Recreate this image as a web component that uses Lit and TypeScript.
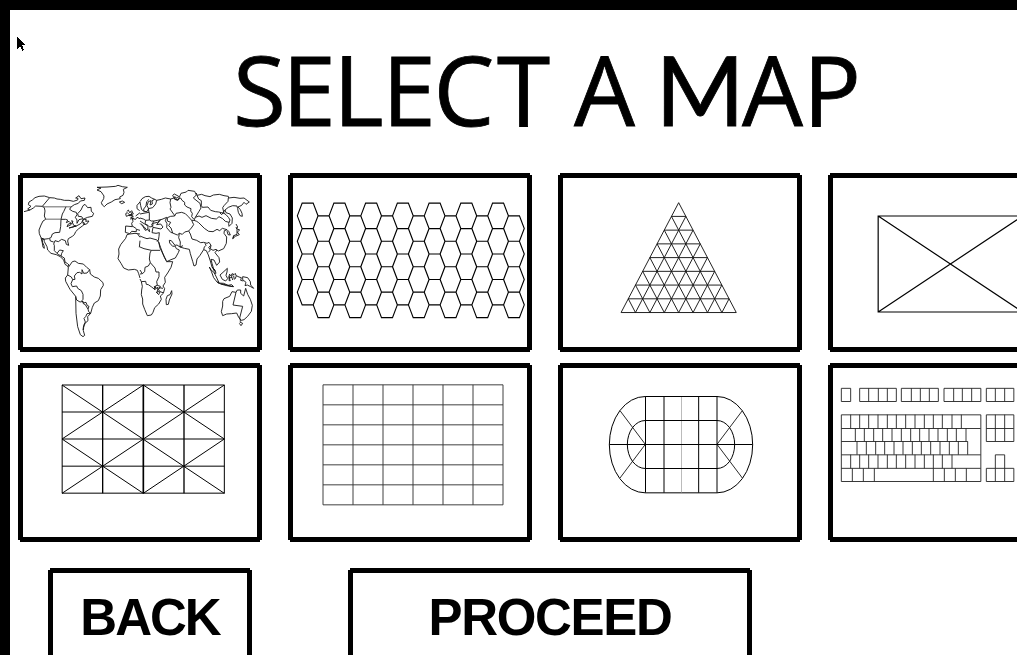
import { LitElement, html, svg, css } from "lit";
import { customElement, property } from "lit/decorators.js";

const v = (xs: number[], y1: number, y2: number) => xs.map((x) => `M${x} ${y1}V${y2}`).join("");
const h = (ys: number[], x1: number, x2: number) => ys.map((y) => `M${x1} ${y}H${x2}`).join("");
const box = (x1: number, y1: number, x2: number, y2: number) => `M${x1} ${y1}H${x2}V${y2}H${x1}Z`;

// Every drawing uses three units per pixel inside its card.
const americas = [
  "M27 125L45 120 38 117 48 109 40 104 42 96 52 90 60 83 72 79 88 78 104 83 82 109 62 108 55 114 45 120",
  "M104 83L118 84 126 87 136 88 148 91 162 91 175 94 188 90 189 85 182 84 192 77 198 86 210 84 208 91 196 93 190 100 178 104 168 111",
  "M82 109L88 113 90 123 88 138 92 148M153 110L146 125 142 132 138 148",
  "M168 111L164 118 173 124 184 127 186 134 181 142 186 150 186 160 192 149 204 146 200 140 190 139 188 131 198 120 204 107 210 103 218 113 228 112 229 124 236 130 232 139 218 142 208 146 202 154",
  "M92 148L84 153 78 165 72 180 73 191 78 203 84 208 100 206 108 203 112 192 120 188 134 187 137 170 138 148",
  "M138 148L152 148 158 150 154 158 162 154 168 160 160 162 156 170 168 164 174 154 170 152 176 166 184 168 170 172 162 174 184 168 195 162 200 158 205 147 214 149 212 154 222 153 215 162 206 164 203 155 210 161 202 168 190 177 182 185 178 194 172 199 160 206 158 213 161 226 154 223 151 212 140 208 130 215 120 212 116 222",
  "M104 206L106 213 116 216M78 203L82 219 84 232 88 235 87 227 83 218 81 205 87 207 88 215 96 230 98 240 108 250 124 254 136 260 146 270 150 283 158 288 162 285 158 281 150 276 148 264 138 258 140 250 145 242 134 240 126 250 118 242 118 226 116 222M126 250L131 254 138 258",
  "M158 288L160 292 172 275 180 273 190 280 205 282 215 292 224 299 226 312 238 321 250 325 264 338 265 346 257 359 256 378 250 392 238 399 232 412 227 430 218 440 219 452 210 460 206 472 205 482 209 496 204 500 196 494 188 470 183 430 182 379 165 358 152 334 151 324 158 315 160 292",
  "M158 315L169 321 173 329 180 328 178 318 186 308 194 307 201 312 201 299 206 310 216 309 224 299M173 329L168 341 172 350 185 348 188 355 199 362 204 373 204 388 201 391 205 399 213 397 217 407 222 409 219 417 215 411 211 404 205 401 204 394 195 396 185 390 182 379M219 417L221 425 227 430M227 430L216 431 212 440 207 445 211 456 206 466 204 480",
  "M246 60L258 54 246 52 276 51 302 49 309 46 322 50 337 52 325 58 327 67 324 76 314 81 316 86 300 89 289 96 276 102 268 110 262 105 259 98 266 86 267 78 258 65 246 60",
  "M313 96L322 93 329 97 320 101 313 96",
  "M335 125L340 120 344 128 350 122 355 132 347 134 355 139 347 142 356 145 345 147M332 131L337 128 344 135 334 139 332 131M346 126L351 130 342 137 352 136",
  "M375 146L366 142 362 148 352 146 354 154 350 160 352 170 332 168 331 187 344 191 350 184 364 185 364 178 375 181M352 168L364 176",
  "M375 192L360 190 344 192 336 194 332 205 317 224 311 237 312 252 309 266 318 280 326 294 340 300 358 298 367 301 371 311 375 324M368 192L375 202M375 212L373 232",
  "M375 96L366 106 366 116 374 122M375 128L362 138",
];
const eurasia = [
  "M0 95L6 86 16 80 27 79 35 84 44 88 36 92 37 102 30 105 33 92 25 95 21 107 26 116 21 125 12 124 11 117 18 108 20 95 27 88",
  "M0 96L2 107 5 119 12 124M0 132L15 129 27 127 25 116 38 113 47 102 50 91 64 88 76 84 92 87 102 84",
  "M92 87L90 98 93 112 90 117 102 134 104 138M44 88L50 91M0 144L10 147 17 151 28 150 34 153 42 153 35 164 38 169 29 171 24 166 14 162 6 157 0 153",
  "M0 160L8 168 16 181 20 180 12 170 4 162M17 151L15 161 24 169 23 180 29 185 27 176M38 169L39 160 53 157 61 150 50 164 62 162 69 171 63 177 39 172 36 188 48 190 58 188 57 199",
  "M28 150L28 127M42 153L53 151 66 148 80 142 76 152 81 161 80 173 92 187 98 189 93 174 86 167 92 157 82 153 82 143 92 139 104 138 108 130 125 127 136 131 145 140 155 151",
  "M102 84L98 76 103 72 116 79 111 85 104 80 104 88 114 91 123 70 139 66 144 61 164 64 169 75 160 84 180 100 183 114 177 124 166 142 162 151 155 151",
  "M102 84L111 90 122 84 126 91 134 97 134 105 141 111 153 116 152 123 157 130 155 140 161 147",
  "M169 69L171 76 185 73 195 77 210 80 220 75 238 73 252 77 265 79 266 84 282 82 300 85 312 84 328 96 318 103 312 97 305 106 294 111 301 119 306 130 307 139 300 137 295 127 293 116 291 108 278 107 265 112 255 120 258 128 270 132 277 144 276 160 267 169 266 161 270 150 266 143 258 134 252 130",
  "M171 76L176 87 184 92 184 106 187 112 204 111 212 121 226 125 236 126 252 130M265 84L264 94 252 107 248 113 252 130M255 120L245 134 240 129",
  "M166 142L177 138 186 142 198 137 214 145 229 147 237 140 248 146 256 154 267 157M162 151L170 154 176 158 193 175 206 184 219 185 231 178 239 182 247 175 261 179 266 184 271 195 264 194 261 183",
  "M155 151L161 164 154 174 146 183 151 192 156 207 170 211 182 218 191 217 201 220 207 217 213 226 211 236 219 241 228 238 235 243 251 236 259 220 260 201 252 190 253 182 260 180",
  "M288 162L293 171 290 176 299 180 292 186 298 194 286 199 278 206 281 197 291 193 291 178 288 171M282 196L279 206",
  "M57 199L55 211 51 215M0 198L12 203 21 206 30 204 51 210 56 216 62 233 68 249 73 262 80 275 93 269 106 264 115 248 118 240 109 236 105 228 98 229 89 219 88 211 94 212 105 226 111 225 120 231 129 227",
  "M98 189L112 195 118 190 127 193 134 186 146 183M118 190L116 203 121 216 120 231 133 235 148 238 151 251 158 274 162 288 168 285 171 267 180 256 191 239 199 242 205 255 211 273 216 291 224 304 220 294 216 280 213 268 222 270 230 286 239 276 237 263 225 248 231 240",
  "M191 239L193 231 198 226 195 220M213 226L206 232 211 240 205 247M56 216L60 234 79 272M0 231L12 236 34 241 60 241M34 241L30 249 28 267 31 278 25 288 15 292 14 305 7 311 0 312",
  "M31 278L45 294 48 306 57 306 57 320 50 335 52 346 46 348 45 359 35 351 25 344 19 343 17 334 4 335 0 327M0 300L7 311",
  "M80 275L98 275 93 292 83 309 74 322 76 337 69 348 74 356 70 370 61 378 64 388 56 402 44 413 39 427 34 435 22 437 14 418 8 402 8 387 4 374 5 360 7 349 4 335",
  "M52 346L61 349 58 356 51 352 59 364 49 367 56 374 60 365 69 368M45 359L43 349 53 358 51 368M57 353L69 355",
  "M95 362L96 372 88 390 85 403 79 404 78 388 82 377 90 374 95 362",
  "M208 291L214 304 221 323 231 336 237 338 229 321 222 307 214 301 208 291M216 291L225 300 228 310 222 309M231 336L240 341 256 344 270 348 281 350 275 344 264 346 251 340 234 339M242 342L260 347 278 350",
  "M262 295L261 306 258 316 263 326 257 333 247 328 240 315 249 307 262 295M269 312L266 322 271 332 267 332 269 319 276 311 283 314 274 316 278 330M281 318L283 329M268 324L276 322M285 309L289 318 285 327",
  "M289 317L297 321 304 323 302 331 310 333M308 320L323 323 331 335 332 345 341 355 332 350 322 345 315 347 318 337 308 329 308 320",
  "M248 394L252 386 269 379 276 365 288 367 292 360 302 360 302 370 311 378 317 355 323 373 331 388 337 406 334 424 323 439 312 449 304 451 296 442 290 429 275 431 260 432 248 437 244 425 248 408 248 394M288 367L279 405 308 409 299 444M299 444L302 455M299 456L308 460 303 467 298 460",
];

const hexes = Array.from({ length: 14 * 4 }, (_, n) => {
  const col = n % 14;
  const x = 37 + col * 47.6;
  const y = 99.5 + Math.floor(n / 14) * 76.3 + (col % 2) * 38.1;
  return `M${x} ${y + 38.1}L${x + 14.5} ${y}h33l14.5 38.1l-14.5 38.2h-33Z`;
}).join("");

const triangles = Array.from({ length: 8 }, (_, i) => {
  const k = i + 1;
  const y = 98 + k * 41.2;
  const half = 21.6 * k;
  const bx = 198.2 + 43.2 * i;
  const rise = (8 - i) * 41.2;
  const run = (8 - i) * 21.6;
  return `M${371 - half} ${y}H${371 + half}M${bx} 427.6l${run} ${-rise}M${543.8 - 43.2 * i} 427.6l${-run} ${-rise}`;
}).join("");

const shiftRow = [77, 104, 131, 159, 187, 214, 242, 270, 298, 325, 352, 381];
const keyboard = [
  box(49, 85, 77, 124.5), box(104, 85, 214, 124.5), v([131, 160, 187], 85, 124.5),
  box(229, 85, 340, 124.5), v([259, 286, 313], 85, 124.5),
  box(357, 85, 467.5, 124.5), v([386, 412, 440], 85, 124.5),
  box(484, 85, 566.5, 124.5), v([511, 539], 85, 124.5),
  box(49, 164.5, 467.5, 364.5), h([205.5, 284.5, 325], 49, 467), h([244.5], 49, 428),
  v([...shiftRow, 409], 164, 205),
  v([91, 118, 146, 173, 201, 229, 257, 284, 312, 339, 367, 394, 423], 205, 244),
  v([96, 124, 152, 179, 207, 234, 262, 289, 317, 345, 373, 400, 428], 244, 284),
  v(shiftRow, 284, 325), v([82, 115, 148, 325, 358, 391, 424], 325, 364),
  box(484, 164.5, 566.5, 244.5), v([511, 539], 164, 244), h([205.5], 484, 566),
  `M511 325V284.5H539V325`, box(484, 325, 566.5, 364.5), v([511, 539], 325, 364),
].join("");

const drawings: Record<string, unknown> = {
  world: svg`<g stroke="#111" stroke-width="2.7"><path d=${americas.join("")} />
    <path d="M82 110.5H168M92 147.5H138" stroke="#555" />
    <path transform="translate(375 0)" d=${eurasia.join("")} /></g>`,
  hexagons: svg`<path stroke-width="3.4" d=${hexes} />`,
  pyramid: svg`<path stroke="#111" stroke-width="2.8" d=${triangles} />`,
  envelope: svg`<path stroke-width="3.6" d="M159.5 138H593V426H159.5ZL593 426M593 138L159.5 426" />`,
  diagonals: svg`<path stroke-width="3" d=${v([141.5, 628], 75, 400) + h([75, 156, 237, 318.5, 399.5], 141, 628)} />
    <path stroke-width="4" d=${v([263, 507], 75, 400)} />
    <path stroke-width="5" d="M385 75V400" />
    <path stroke-width="3" d="M141 75L628 400M628 75L141 400M385 75L628 237L385 400L141 237Z" />`,
  grid: svg`<path stroke="#333" stroke-width="2.8" d=${v([114, 204, 294, 384, 474, 564, 654], 74.5, 434.5) + h([74.5, 134.5, 194.5, 254.5, 314.5, 374.5, 434.5], 114, 654)} />`,
  stadium: svg`<path stroke-width="3" d="M271 109.5H486A107 144.5 0 0 1 486 398.5H271A108 144.5 0 0 1 271 109.5ZM271 181.5H486A53 72 0 0 1 486 325.5H271A54 72 0 0 1 271 181.5ZM163 253.5H593" />
    <path stroke-width="3" d=${v([271.5, 327, 431, 486], 109, 398)} />
    <path stroke="#bbb" stroke-width="3" d="M379.5 111V180M379.5 183V252M379.5 255V324M379.5 327V397" />
    <path stroke-width="2.5" d="M195 152L271 253L195 354M562 152L486 253L562 354" />`,
  keyboard: svg`<path stroke="#222" stroke-width="2.7" d=${keyboard} />`,
};

@customElement("map-card")
class MapCard extends LitElement {
  @property() kind = "world";
  static styles = css`
    :host {
      display: block;
      box-sizing: border-box;
      width: 244px;
      height: 179px;
      border: 5px solid #000;
      background: #fff;
      clip-path: polygon(2px 0, calc(100% - 2px) 0, calc(100% - 2px) 2px, 100% 2px, 100% calc(100% - 2px), calc(100% - 2px) calc(100% - 2px), calc(100% - 2px) 100%, 2px 100%, 2px calc(100% - 2px), 0 calc(100% - 2px), 0 2px, 2px 2px);
    }
    .drawing { display: block; width: 234px; height: 169px; fill: none; stroke: #000; }
  `;
  render() {
    return html`<svg class="drawing" viewBox="24 24 702 507">${drawings[this.kind]}</svg>`;
  }
}

@customElement("app-root")
class AppRoot extends LitElement {
  static styles = css`
    :host {
      display: block;
      box-sizing: border-box;
      height: 655px;
      overflow: hidden;
      position: relative;
      border-left: 10px solid #000;
      border-top: 10px solid #000;
      background: #fff;
      color: #000;
    }
    .title { display: block; width: 1007px; height: 163px; font: 400 96.5px "Open Sans", sans-serif; stroke: #000; stroke-width: 0.8px; }
    .splayed { font-family: Lato, sans-serif; font-size: 96px; }
    .maps { display: grid; grid-template-columns: repeat(4, 244px); gap: 11px 26px; padding-left: 8px; }
    .actions { display: flex; gap: 96px; padding: 26px 0 0 38px; }
    .action {
      box-sizing: border-box;
      flex: none;
      width: 204px;
      height: 104px;
      padding: 0 0 4px;
      border: 5px solid #000;
      background: #fff;
      color: #000;
      font: bold 51px/86px "Liberation Sans", Arial, sans-serif;
      letter-spacing: -2px;
      text-align: center;
      white-space: nowrap;
      clip-path: polygon(2px 0, calc(100% - 2px) 0, calc(100% - 2px) 2px, 100% 2px, 100% 100%, 0 100%, 0 2px, 2px 2px);
    }
    .proceed { width: 404px; letter-spacing: -1.3px; }
    .pointer { position: absolute; left: 7px; top: 27px; width: 8px; height: 15px; }
  `;
  render() {
    return html`
      <svg class="title" viewBox="10 10 1007 163">
        <text y="125.7" x="233 282.2 333.2 382.2 433.5 497 546 574 635">SELECT A <tspan class="splayed" x="655.5">M</tspan><tspan x="742 803">AP</tspan></text>
      </svg>
      <div class="maps">${Object.keys(drawings).map((kind) => html`<map-card kind=${kind}></map-card>`)}</div>
      <div class="actions">
        <button class="action">BACK</button>
        <button class="action proceed">PROCEED</button>
      </div>
      <svg class="pointer" viewBox="0 0 8 15" shape-rendering="crispEdges">
        <path d="M0 0L8 8H5L7 13L5.5 14L3 9L0 12Z" />
      </svg>
    `;
  }
}
